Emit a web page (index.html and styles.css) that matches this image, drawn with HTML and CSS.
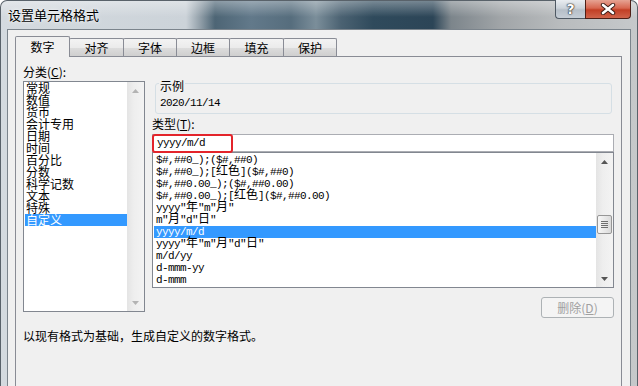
FILE: index.html
```html
<!DOCTYPE html>
<html lang="zh-CN">
<head>
  <meta charset="UTF-8" />
  <title>设置单元格格式</title>
  <link rel="stylesheet" href="styles.css">
</head>
<body>

  <div class="window">
    <div class="titlebar">
      <span class="title">设置单元格格式</span>
      <div class="caption">
        <div class="cbtn help">?</div>
        <div class="cbtn close">
          <svg width="16" height="12" viewBox="0 0 16 12">
            <path d="M3 2 L13 10 M13 2 L3 10" stroke="#3a1a14" stroke-width="4.4" stroke-linecap="round" fill="none"/>
            <path d="M3 2 L13 10 M13 2 L3 10" stroke="#fff" stroke-width="2.6" stroke-linecap="round" fill="none"/>
          </svg>
        </div>
      </div>
    </div>

    <div class="client">
      <div class="tabs">
        <div class="tab active">数字</div>
        <div class="tab">对齐</div>
        <div class="tab">字体</div>
        <div class="tab">边框</div>
        <div class="tab">填充</div>
        <div class="tab">保护</div>
      </div>

      <div class="panel">
        <div class="top">
          <div class="left">
            <div class="lbl">分类(<u>C</u>):</div>
            <div class="listbox cat">
              <ul class="items">
                <li>常规</li>
                <li>数值</li>
                <li>货币</li>
                <li>会计专用</li>
                <li>日期</li>
                <li>时间</li>
                <li>百分比</li>
                <li>分数</li>
                <li>科学记数</li>
                <li>文本</li>
                <li>特殊</li>
                <li class="sel">自定义</li>
              </ul>
              <div class="vscroll off">
                <div class="sbtn"><svg width="7" height="4" viewBox="0 0 7 4"><path d="M0 4 L3.5 0 L7 4 Z"/></svg></div>
                <div class="track"></div>
                <div class="sbtn"><svg width="7" height="4" viewBox="0 0 7 4"><path d="M0 0 L3.5 4 L7 0 Z"/></svg></div>
              </div>
            </div>
          </div>

          <div class="right">
            <fieldset class="sample">
              <legend>示例</legend>
              <div class="sample-val">2020/11/14</div>
            </fieldset>

            <div class="lbl type-lbl">类型(<u>T</u>):</div>
            <div class="typebox">
              <span>yyyy/m/d</span>
              <div class="mark"></div>
            </div>

            <div class="listbox fmt">
              <ul class="items">
                <li>$#,##0_);($#,##0)</li>
                <li>$#,##0_);[<span class="w">红色</span>]($#,##0)</li>
                <li>$#,##0.00_);($#,##0.00)</li>
                <li>$#,##0.00_);[<span class="w">红色</span>]($#,##0.00)</li>
                <li>yyyy"<span class="w">年</span>"m"<span class="w">月</span>"</li>
                <li>m"<span class="w">月</span>"d"<span class="w">日</span>"</li>
                <li class="sel">yyyy/m/d</li>
                <li>yyyy"<span class="w">年</span>"m"<span class="w">月</span>"d"<span class="w">日</span>"</li>
                <li>m/d/yy</li>
                <li>d-mmm-yy</li>
                <li>d-mmm</li>
              </ul>
              <div class="vscroll">
                <div class="sbtn"><svg width="7" height="4" viewBox="0 0 7 4"><path d="M0 4 L3.5 0 L7 4 Z"/></svg></div>
                <div class="track">
                  <div class="thumb"><i></i><i></i><i></i><i></i></div>
                </div>
                <div class="sbtn"><svg width="7" height="4" viewBox="0 0 7 4"><path d="M0 0 L3.5 4 L7 0 Z"/></svg></div>
              </div>
            </div>

            <div class="btnrow">
              <button class="btn-del" disabled>删除(<u>D</u>)</button>
            </div>
          </div>
        </div>

        <p class="desc">以现有格式为基础，生成自定义的数字格式。</p>
      </div>
    </div>
  </div>

</body>
</html>
```

FILE: styles.css
```css
body {
  margin: 0;
  width: 638px;
  height: 386px;
  overflow: hidden;
  font-family: "Noto Sans CJK SC", sans-serif;
  font-size: 12px;
  color: #000;
  background: #fff;
}

/* window frame + aero title bar */
.window {
  width: 638px;
  height: 386px;
  box-sizing: border-box;
  border: 1px solid #59626a;
  border-bottom: none;
  border-radius: 7px 7px 0 0;
  display: flex;
  flex-direction: column;
  background:
    linear-gradient(to bottom, rgba(255,255,255,0.35), rgba(255,255,255,0) 16px),
    linear-gradient(to right, #d4dadf 0, #ccd3d9 185px, #8e9ca6 200px, #4d6575 214px,
      #62798a 250px, #566d7d 290px, #7b8e9a 315px, #4b6272 340px, #2f4a5c 372px,
      #2c4557 432px, #7c858b 450px, #a1a5a8 500px, #b9bcbe 560px, #c6c9cb 638px);
}
.titlebar {
  height: 28px;
  display: flex;
  justify-content: space-between;
  align-items: flex-start;
}
.title {
  padding-left: 7px;
  line-height: 27px;
  font-size: 13px;
  text-shadow: 0 0 5px rgba(255,255,255,0.9), 0 0 2px rgba(255,255,255,0.9);
}
.caption {
  display: flex;
  margin-top: -1px;
  margin-right: 6px;
}
.cbtn {
  height: 19px;
  box-sizing: border-box;
  display: flex;
  align-items: center;
  justify-content: center;
}
.help {
  width: 30px;
  border: 1px solid #4f5963;
  border-top: none;
  border-right: none;
  border-radius: 0 0 0 4px;
  background: linear-gradient(to bottom, #e9edf1, #ccd3da 45%, #b6bfc8 55%, #c6ced6);
  color: #fff;
  font: bold 14px "DejaVu Sans", sans-serif;
  text-shadow: 0 0 1px #222, 0 0 1px #222, 0 0 2px #333;
}
.close {
  width: 46px;
  border: 1px solid #4e1f16;
  border-top: none;
  border-radius: 0 0 4px 0;
  background: linear-gradient(to bottom, #e6a393, #d76750 45%, #c23f25 55%, #d0634a);
}

/* dialog client area */
.client {
  flex: 1;
  margin: 0 6px;
  border: 1px solid #7b848c;
  border-bottom: none;
  background: #f0f0f0;
  padding: 6px 8px 0 7px;
  display: flex;
  flex-direction: column;
}
.tabs {
  display: flex;
  align-items: flex-end;
  height: 20px;
}
.tab {
  width: 54px;
  height: 18px;
  margin-left: -1px;
  box-sizing: border-box;
  border: 1px solid #898c95;
  border-bottom: none;
  border-radius: 2px 2px 0 0;
  background: linear-gradient(to bottom, #f3f3f3, #ebebeb 50%, #dddddd 50%, #cfcfcf);
  text-align: center;
  line-height: 17px;
}
.tab:nth-child(2),
.tab:nth-child(5) {
  width: 55px;
}
.tab.active {
  width: 55px;
  height: 21px;
  margin-left: 0;
  margin-bottom: -1px;
  position: relative;
  z-index: 2;
  background: #f0f0f0;
  line-height: 19px;
}
.panel {
  flex: 1;
  border: 1px solid #898c95;
  border-bottom: none;
  padding: 9px 7px 0 7px;
}

.top {
  display: flex;
  gap: 7px;
  align-items: flex-start;
}
.lbl {
  line-height: 12px;
  height: 12px;
}
.left {
  width: 122px;
}
.right {
  width: 462px;
  display: flex;
  flex-direction: column;
}

/* list boxes */
.listbox {
  box-sizing: border-box;
  border: 1px solid #828790;
  background: #fff;
  display: flex;
}
.cat {
  margin-top: 3px;
  height: 231px;
}
.items {
  list-style: none;
  margin: 0;
  padding: 0;
  flex: 1;
}
.items li {
  height: 12px;
  line-height: 12px;
  white-space: nowrap;
}
.cat li {
  margin-left: 1px;
  padding-left: 1px;
}
.items li.sel {
  background: #3399ff;
  color: #fff;
}
.fmt {
  height: 136px;
}
.fmt .items {
  padding-top: 1px;
}
.fmt li {
  margin-left: 1px;
  padding-left: 2px;
  font-family: "Liberation Mono", monospace;
  font-size: 11px;
  letter-spacing: -0.6px;
}
.w {
  font-family: "Noto Sans CJK SC", sans-serif;
  font-size: 12px;
  line-height: 8px;
  letter-spacing: 0;
}

/* scroll bars */
.vscroll {
  width: 17px;
  display: flex;
  flex-direction: column;
  background: linear-gradient(to right, #e4e4e4, #eeeeee 40%, #f3f3f3);
}
.sbtn {
  height: 17px;
  display: flex;
  align-items: center;
  justify-content: center;
}
.sbtn svg {
  fill: #555;
}
.vscroll.off .sbtn svg {
  fill: #b3b3b3;
}
.track {
  flex: 1;
  padding-top: 45px;
}
.thumb {
  height: 19px;
  margin: 0 1px;
  box-sizing: border-box;
  border: 1px solid #969696;
  border-radius: 2px;
  background: linear-gradient(to right, #f7f7f7, #e6e6e6 60%, #dadada);
  display: flex;
  flex-direction: column;
  align-items: center;
  justify-content: center;
  gap: 1px;
}
.thumb i {
  width: 7px;
  height: 1px;
  background: #6e6e6e;
}

/* sample group */
.sample {
  margin: 8px 2px 0 3px;
  padding: 0 3px 4px 3px;
  min-width: 0;
  border: 1px solid #d5dfe5;
  border-radius: 3px;
}
.sample legend {
  padding: 6px 1px 0 1px;
  line-height: 12px;
}
.sample-val {
  margin: 5px 0 0 1px;
  line-height: 12px;
  font-family: "Liberation Mono", monospace;
  font-size: 11px;
  letter-spacing: -0.6px;
}

.type-lbl {
  margin-top: 4px;
}
.typebox {
  position: relative;
  margin-top: 4px;
  height: 18px;
  box-sizing: border-box;
  border: 1px solid #abadb3;
  background: #fff;
  padding-left: 4px;
  line-height: 16px;
  font-family: "Liberation Mono", monospace;
  font-size: 11px;
  letter-spacing: -0.6px;
}
.mark {
  position: absolute;
  left: -1px;
  top: -1px;
  width: 81px;
  height: 19px;
  box-sizing: border-box;
  border: 2px solid #e3242b;
  border-radius: 3px;
}

.btnrow {
  margin-top: 9px;
  display: flex;
  justify-content: flex-end;
}
.btn-del {
  width: 73px;
  height: 21px;
  padding: 0;
  border: 1px solid #adb2b5;
  border-radius: 3px;
  background: #f4f4f4;
  color: #a0a0a0;
  font-family: "Noto Sans CJK SC", sans-serif;
  font-size: 12px;
}

.desc {
  margin: 12px 0 0 0;
  line-height: 12px;
}
```
